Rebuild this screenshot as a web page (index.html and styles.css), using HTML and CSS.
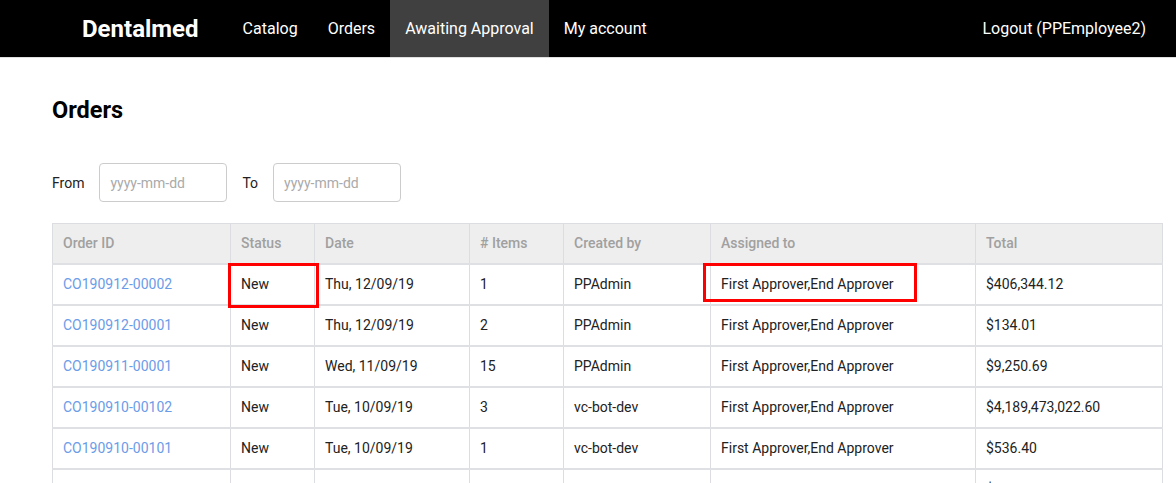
FILE: index.html
```html
<!DOCTYPE html>
<html>
<head>
<meta charset="utf-8">
<link rel="stylesheet" href="styles.css">
</head>
<body>
<nav class="navbar">
  <a class="brand">Dentalmed</a>
  <ul class="nav-links">
    <li><a>Catalog</a></li>
    <li><a>Orders</a></li>
    <li class="active"><a>Awaiting Approval</a></li>
    <li><a>My account</a></li>
  </ul>
  <a class="logout">Logout (PPEmployee2)</a>
</nav>
<main class="content">
  <h1 class="title">Orders</h1>
  <div class="filters">
    <label class="filter-label">From</label>
    <input class="date-input" type="text" placeholder="yyyy-mm-dd">
    <label class="filter-label to">To</label>
    <input class="date-input" type="text" placeholder="yyyy-mm-dd">
  </div>
  <div class="table-wrap">
    <table class="orders">
      <colgroup>
        <col class="c1"><col class="c2"><col class="c3"><col class="c4"><col class="c5"><col class="c6"><col class="c7">
      </colgroup>
      <thead>
        <tr><th>Order ID</th><th>Status</th><th>Date</th><th># Items</th><th>Created by</th><th>Assigned to</th><th>Total</th></tr>
      </thead>
      <tbody>
        <tr><td><a>CO190912-00002</a></td><td>New</td><td>Thu, 12/09/19</td><td>1</td><td>PPAdmin</td><td>First Approver,End Approver</td><td>$406,344.12</td></tr>
        <tr><td><a>CO190912-00001</a></td><td>New</td><td>Thu, 12/09/19</td><td>2</td><td>PPAdmin</td><td>First Approver,End Approver</td><td>$134.01</td></tr>
        <tr><td><a>CO190911-00001</a></td><td>New</td><td>Wed, 11/09/19</td><td>15</td><td>PPAdmin</td><td>First Approver,End Approver</td><td>$9,250.69</td></tr>
        <tr><td><a>CO190910-00102</a></td><td>New</td><td>Tue, 10/09/19</td><td>3</td><td>vc-bot-dev</td><td>First Approver,End Approver</td><td>$4,189,473,022.60</td></tr>
        <tr><td><a>CO190910-00101</a></td><td>New</td><td>Tue, 10/09/19</td><td>1</td><td>vc-bot-dev</td><td>First Approver,End Approver</td><td>$536.40</td></tr>
        <tr class="partial"><td></td><td></td><td></td><td></td><td></td><td></td><td>$</td></tr>
      </tbody>
    </table>
    <div class="highlight hl-status"></div>
    <div class="highlight hl-assigned"></div>
  </div>
</main>
</body>
</html>
```

FILE: styles.css
```css
* { box-sizing: border-box; }
html, body { margin: 0; padding: 0; }
body {
  font-family: Roboto, "Liberation Sans", sans-serif;
  font-size: 14px;
  color: #222;
  background: #fff;
  overflow: hidden;
  height: 483px;
}
a { text-decoration: none; color: inherit; }

.navbar {
  display: flex;
  align-items: stretch;
  height: 58px;
  background: #000;
  border-bottom: 1px solid #e0e0e0;
  padding: 0 30px 0 67px;
}
.brand {
  display: flex;
  align-items: center;
  padding: 0 15px;
  color: #fff;
  font-size: 24px;
  font-weight: 700;
  margin-right: 14px;
}
.nav-links {
  display: flex;
  list-style: none;
  margin: 0;
  padding: 0;
  flex: 1;
}
.nav-links li {
  display: flex;
  align-items: center;
  padding: 0 15px;
  color: #fff;
  font-size: 16px;
}
.nav-links li.active { background: #404040; }
.logout {
  display: flex;
  align-items: center;
  color: #fff;
  font-size: 16px;
}

.content { padding: 0 14px 0 52px; }
.title {
  margin: 39px 0 0;
  font-size: 23.5px;
  font-weight: 700;
  color: #000;
  line-height: 27px;
}
.filters {
  display: flex;
  align-items: center;
  margin-top: 39px;
  height: 39px;
}
.filter-label { font-size: 14px; color: #222; margin-right: 15px; }
.filter-label.to { margin-left: 15px; margin-right: 15px; }
.date-input {
  width: 128px;
  height: 39px;
  border: 1px solid #ccc;
  border-radius: 4px;
  padding: 0 10px;
  font-family: inherit;
  font-size: 14px;
  color: #222;
  outline: none;
}
.date-input::placeholder { color: #aaa; }

.table-wrap {
  position: relative;
  margin-top: 21px;
  width: 1110px;
}
.orders {
  width: 1110px;
  border-collapse: collapse;
  table-layout: fixed;
  border: 1px solid #dcdde0;
}
.c1 { width: 178px; } .c2 { width: 84px; } .c3 { width: 155px; } .c4 { width: 94px; }
.c5 { width: 147px; } .c6 { width: 265px; } .c7 { width: 187px; }
.orders th, .orders td {
  text-align: left;
  padding: 0 10px;
  height: 41px;
  border-left: 1px solid #dcdde0;
  border-right: 1px solid #dcdde0;
  border-bottom: 2px solid #dee0e3;
  white-space: nowrap;
  overflow: hidden;
}
.orders th {
  background: #eeeeee;
  color: #a0a0a0;
  font-weight: 500;
  font-size: 14px;
  height: 40px;
}
.orders td { color: #222; }
.orders td a { color: #6b9ce8; }

.highlight {
  position: absolute;
  border: 3px solid #f00;
  pointer-events: none;
}
.hl-status { left: 176px; top: 40px; width: 91px; height: 45px; }
.hl-assigned { left: 651px; top: 40px; width: 214px; height: 39px; }
```
